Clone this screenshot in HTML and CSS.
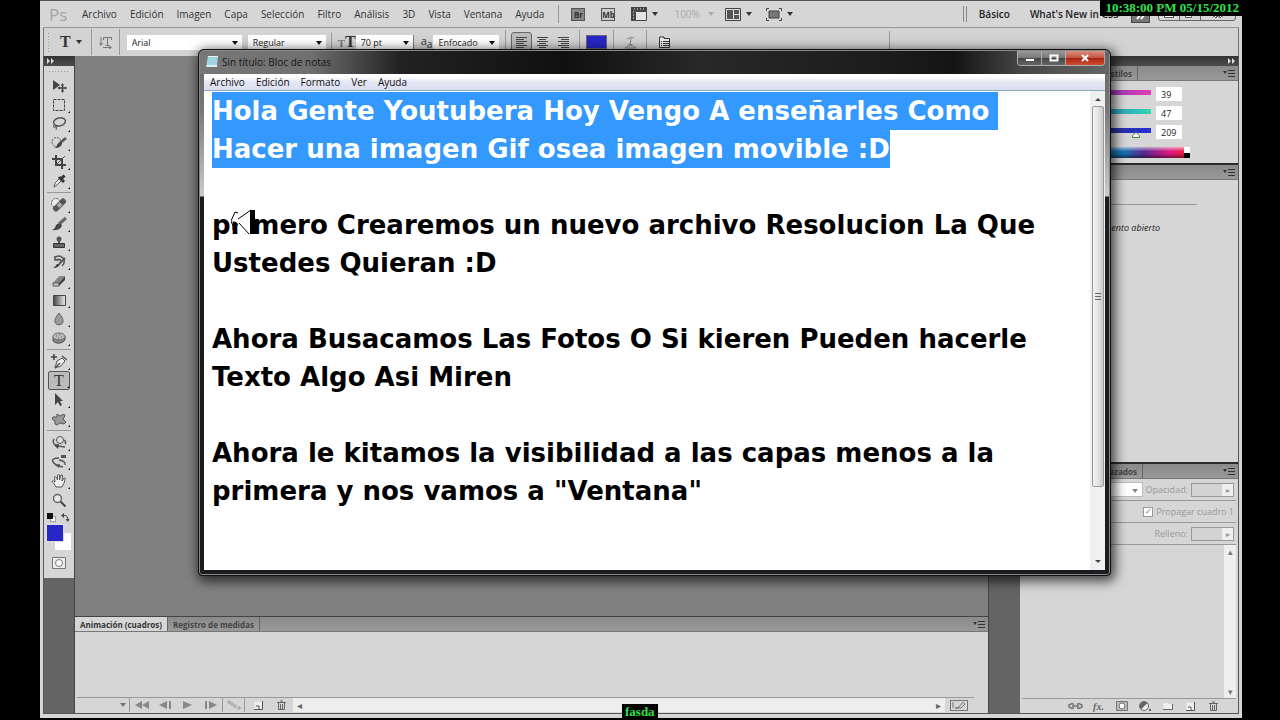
FILE: index.html
```html
<!DOCTYPE html>
<html lang="es">
<head>
    <meta charset="UTF-8">
    <meta name="viewport" content="width=device-width, initial-scale=1.0">
    <title>Photoshop - Bloc de notas</title>
    <link rel="stylesheet" href="styles.css">
</head>
<body>

<div class="app">
    <!-- barra de menus -->
    <header class="menubar">
        <span class="logo">Ps</span>
        <nav class="menus">
            <a href="#">Archivo</a>
            <a href="#">Edición</a>
            <a href="#">Imagen</a>
            <a href="#">Capa</a>
            <a href="#">Selección</a>
            <a href="#">Filtro</a>
            <a href="#">Análisis</a>
            <a href="#">3D</a>
            <a href="#">Vista</a>
            <a href="#">Ventana</a>
            <a href="#">Ayuda</a>
        </nav>
        <span class="rule"></span>
        <button class="box br">Br</button>
        <button class="box mb">Mb</button>
        <button class="drop extras" aria-label="Extras">
            <svg width="16" height="14" viewBox="0 0 16 14"><path d="M0 0h16v4H4v10H0z" fill="#444"/><path d="M4.500 4.500h11v9h-11z" fill="#e4e4e4" stroke="#444"/><path d="M3 2h1M6 2h1M9 2h1M12 2h1M2 5h1M2 8h1M2 11h1" stroke="#eee"/></svg>
        </button>
        <button class="drop zoom">100%</button>
        <button class="drop arrange" aria-label="Organizar documentos">
            <svg width="16" height="13" viewBox="0 0 16 13"><path d="M.5.500h15v12H.5z" fill="#ddd" stroke="#444"/><path d="M2 2h6v9H2zM9 2h5v4H9zM9 7h5v4H9z" fill="#555"/></svg>
        </button>
        <button class="drop" aria-label="Modo de pantalla">
            <svg width="16" height="13" viewBox="0 0 16 13"><path d="M3 3h10v7H3z" fill="#777" stroke="#444"/><path d="M.5 3V.5H3M13 .5h2.500V3M.5 10v2.500H3M13 12.500h2.500V10" fill="none" stroke="#444"/></svg>
        </button>
        <div class="workspaces">
            <span class="grip"></span>
            <a href="#">Básico</a>
            <a href="#">What's New in CS5</a>
            <button class="more" aria-label="Más espacios">
                <svg width="12" height="12" viewBox="0 0 12 12"><path d="M2 1l4 5-4 5M6 1l4 5-4 5" fill="none" stroke="#fff" stroke-width="2"/></svg>
            </button>
            <div class="winbtns">
                <button aria-label="Minimizar"><svg width="10" height="8" viewBox="0 0 10 8"><path d="M.5 3.500h9v4h-9z" fill="#fff" stroke="#555"/></svg></button>
                <button aria-label="Restaurar"><svg width="10" height="8" viewBox="0 0 10 8"><path d="M2.500.5h7v4h-7zM.5 3.500h6v4h-6z" fill="#fff" stroke="#555"/></svg></button>
                <button aria-label="Cerrar"><svg width="10" height="8" viewBox="0 0 10 8"><path d="M1 0l8 8M9 0L1 8" stroke="#555" stroke-width="3"/><path d="M1 0l8 8M9 0L1 8" stroke="#fff"/></svg></button>
            </div>
        </div>
    </header>

    <!-- opciones de la herramienta texto -->
    <div class="options">
        <span class="dots"></span>
        <button class="drop tool-t">T</button>
        <button class="orient" aria-label="Orientación">
            <svg width="13" height="13" viewBox="0 0 13 13"><path d="M2 1v8M.5 7L2 9.500 3.500 7M4.500 4V1.500h8V4M8.500 2v7M6.500 9.500h4M4 11.500h8M10 10l2.500 1.500L10 13" fill="none" stroke="#777"/></svg>
        </button>
        <span class="pick family"><select aria-label="Fuente"><option>Arial</option></select></span>
        <span class="pick style"><select aria-label="Estilo"><option>Regular</option></select></span>
        <span class="sizeicon"><small>T</small>T</span>
        <span class="pick size"><select aria-label="Tamaño"><option>70 pt</option></select></span>
        <span class="aa">a<sub>a</sub></span>
        <span class="pick alias"><select aria-label="Suavizado"><option>Enfocado</option></select></span>
        <div class="aligns">
            <button class="on" aria-label="Izquierda"><svg width="13" height="13" viewBox="0 0 13 13"><path d="M1 1.500h11M1 3.500h8M1 5.500h11M1 7.500h8M1 9.500h11M1 11.500h8" stroke="#444"/></svg></button>
            <button aria-label="Centro"><svg width="13" height="13" viewBox="0 0 13 13"><path d="M1 1.500h11M3 3.500h7M1 5.500h11M3 7.500h7M1 9.500h11M3 11.500h7" stroke="#444"/></svg></button>
            <button aria-label="Derecha"><svg width="13" height="13" viewBox="0 0 13 13"><path d="M1 1.500h11M4 3.500h8M1 5.500h11M4 7.500h8M1 9.500h11M4 11.500h8" stroke="#444"/></svg></button>
        </div>
        <button class="tint" aria-label="Color del texto"></button>
        <button class="warp" aria-label="Deformar"><svg width="13" height="13" viewBox="0 0 13 13"><path d="M3 3q4-3 7-1M7 2L6 9M4.500 8.500h4M1 12q6-5 11 0z" fill="none" stroke="#888"/></svg></button>
        <button class="chars" aria-label="Paneles"><svg width="13" height="13" viewBox="0 0 13 13"><path d="M1.500 2.500V1H6v1.500h5.500v9h-10z" fill="#eee" stroke="#333"/><path d="M3 5.500h1M5 5.500h6M3 7.500h1M5 7.500h6M3 9.500h1M5 9.500h6" stroke="#333"/></svg></button>
    </div>

    <div class="work">
        <aside class="tools">
            <div class="strip">
                <svg width="7" height="6" viewBox="0 0 7 6"><path d="M0 0l3 3-3 3zM4 0l3 3-3 3z" fill="#ddd"/></svg>
            </div>
            <div class="toolbox">
                <span class="dots wide"></span>
                <button class="plain" aria-label="Mover"><svg width="16" height="16" viewBox="0 0 16 16"><path d="M2 2v10l7-5z" fill="#444"/><path d="M11.500 6v8M7.500 10h8" stroke="#444" stroke-width="1.500"/><path d="M10 7.500L11.500 5 13 7.500zM10 12.500l1.500 2.500 1.500-2.500zM9 8.500L6.500 10 9 11.500zM14 8.500l2 1.500-2 1.500z" fill="#444"/></svg></button>
                <button aria-label="Marco"><svg width="16" height="16" viewBox="0 0 16 16"><path d="M2.500 2.500h11v11h-11z" fill="none" stroke="#444" stroke-dasharray="3 1"/></svg></button>
                <button aria-label="Lazo"><svg width="16" height="16" viewBox="0 0 16 16"><ellipse cx="8.500" cy="6" rx="6" ry="4" transform="rotate(-12 8 6)" fill="none" stroke="#555" stroke-width="1.500"/><path d="M4 9q-3 1-1 2.500 3 0 2-2.500 1 3 0 5" fill="none" stroke="#555"/></svg></button>
                <button aria-label="Selección rápida"><svg width="16" height="16" viewBox="0 0 16 16"><circle cx="5.500" cy="7" r="4.500" fill="none" stroke="#555" stroke-dasharray="2 1"/><path d="M15 3L9 8" stroke="#555" stroke-width="2.500"/><path d="M11 8q0 5-8 5 3-1 3.500-4 2-3 4.500-1z" fill="#444"/></svg></button>
                <button aria-label="Recortar"><svg width="16" height="16" viewBox="0 0 16 16"><path d="M5 1v10h10M1 5h10v10" fill="none" stroke="#444" stroke-width="2"/><path d="M5 11L14 2" stroke="#555"/></svg></button>
                <button aria-label="Cuentagotas"><svg width="16" height="16" viewBox="0 0 16 16"><path d="M3 14l1-4 5-5 2 2-5 5z" fill="#eee" stroke="#555"/><path d="M8 4l5 5M10 6l3.500-3.500" stroke="#333" stroke-width="3"/></svg></button>
                <hr>
                <button aria-label="Pincel corrector"><svg width="16" height="16" viewBox="0 0 16 16"><circle cx="5" cy="6" r="4.500" fill="#eee" stroke="#555" stroke-dasharray="2 1"/><path d="M5 11.500l7-7" stroke="#555" stroke-width="6" stroke-linecap="round"/><path d="M7 9.500l3-3" stroke="#aaa" stroke-width="4"/></svg></button>
                <button aria-label="Pincel"><svg width="16" height="16" viewBox="0 0 16 16"><path d="M15 2L8 8" stroke="#666" stroke-width="3"/><path d="M11 9q-1 6-10 5 3-1 4-5 3-3 6 0z" fill="#444"/></svg></button>
                <button aria-label="Tampón"><svg width="16" height="16" viewBox="0 0 16 16"><circle cx="8" cy="4" r="2.500" fill="#555"/><path d="M7 5h2v4H7z" fill="#555"/><path d="M2.500 8.500h11v4h-11z" fill="#666" stroke="#333"/></svg></button>
                <button aria-label="Pincel de historia"><svg width="16" height="16" viewBox="0 0 16 16"><path d="M3 4q5-4 9 0 3 4-1 8M4 2v4h4M5 6q4-2 5 1" fill="none" stroke="#555" stroke-width="1.500"/><path d="M14 4L8 10" stroke="#555" stroke-width="2"/><path d="M9 10q-1 4-7 4 3-2 4-4z" fill="#444"/></svg></button>
                <button aria-label="Borrador"><svg width="16" height="16" viewBox="0 0 16 16"><path d="M2 10l6-7h6l-6 7z" fill="#888"/><path d="M2 10h6v3H2z" fill="#ccc" stroke="#555"/><path d="M8 10l6-7v4l-6 6z" fill="#444"/></svg></button>
                <button aria-label="Degradado"><svg width="16" height="16" viewBox="0 0 16 16"><defs><linearGradient id="deg"><stop stop-color="#444"/><stop offset="1" stop-color="#eee"/></linearGradient></defs><path d="M2.500 3.500h12v10h-12z" fill="url(#deg)" stroke="#444"/></svg></button>
                <button aria-label="Desenfocar"><svg width="16" height="16" viewBox="0 0 16 16"><path d="M8 2q5 6 4 9-1 3-4 3t-4-3q-1-3 4-9z" fill="#999" stroke="#666"/></svg></button>
                <button aria-label="Esponja"><svg width="16" height="16" viewBox="0 0 16 16"><path d="M2 7v4q4 4 10 1l2-2V6z" fill="#888" stroke="#555"/><ellipse cx="8" cy="6.500" rx="6" ry="3.500" fill="#bbb" stroke="#666"/><path d="M5 6h1M8 5h1M10 7h1M7 8h1" stroke="#666"/></svg></button>
                <hr>
                <button aria-label="Pluma"><svg width="16" height="16" viewBox="0 0 16 16"><path d="M3 0v6M0 3h6" stroke="#444" stroke-width="1.500"/><path d="M4 14l2-7 5-3 3 3-4 5z" fill="#eee" stroke="#555"/><path d="M4 14l5-5M11 2l5 4" stroke="#555" stroke-width="1.500"/></svg></button>
                <button class="type on" aria-label="Texto">T</button>
                <button aria-label="Selección de trazado"><svg width="16" height="16" viewBox="0 0 16 16"><path d="M4 1v12l3-3 2 4 2-1-2-4h3z" fill="#444"/></svg></button>
                <button aria-label="Forma"><svg width="16" height="16" viewBox="0 0 16 16"><path d="M6 3l3 2 4-2 1 2-2 3 3 3-2 2-4-1-3 2-2-1v-3L1 8l1-2 4 0z" fill="#999" stroke="#555"/></svg></button>
                <hr>
                <button aria-label="Rotar 3D"><svg width="16" height="16" viewBox="0 0 16 16"><path d="M3 4q-3 5 4 7l7 1M14 9q2-3-2-4" fill="none" stroke="#555" stroke-width="1.500"/><circle cx="9" cy="5" r="3.500" fill="#ddd" stroke="#555"/><path d="M3 10l5-1-1 5z" fill="#444"/></svg></button>
                <button aria-label="Cámara 3D"><svg width="16" height="16" viewBox="0 0 16 16"><path d="M8 4Q0 4 2 8q3 4 10 5M8 6q7 1 6 5" fill="none" stroke="#555" stroke-width="1.500"/><path d="M4 11l5-1-1 4zM10 1h5v3h-5z" fill="#555"/></svg></button>
                <button aria-label="Mano"><svg width="16" height="16" viewBox="0 0 16 16"><path d="M5 14Q3 10 1 8.500q1-2 3 .5L3.500 4q1.500-1 2 .5L6.500 7V2q1.500-1 2 0v5l1.500-5q2-.5 1.500 1L11 8l2-3q2 0 1 2-1 4-3 7z" fill="#eee" stroke="#555"/></svg></button>
                <button class="plain" aria-label="Zoom"><svg width="16" height="16" viewBox="0 0 16 16"><circle cx="6.500" cy="6.500" r="4" fill="#e8e8e8" stroke="#666" stroke-width="1.500"/><path d="M9.500 9.500l5 5" stroke="#444" stroke-width="2"/></svg></button>
                <div class="mini">
                    <svg width="9" height="9" viewBox="0 0 9 9"><path d="M3.500 3.500h5v5h-5z" fill="#fff" stroke="#999"/><path d="M0 0h6v6H0z" fill="#111"/></svg>
                    <svg width="9" height="9" viewBox="0 0 9 9"><path d="M2 2.500q5-1 5 5" fill="none" stroke="#444"/><path d="M0 2.500L3 0v5zM4.500 6h4L7 9z" fill="#444"/></svg>
                </div>
                <div class="swatches"><span class="bg"></span><span class="fg"></span></div>
                <button class="plain mask" aria-label="Máscara rápida"><svg width="14" height="12" viewBox="0 0 14 12"><path d="M.5.500h13v11H.5z" fill="#eee" stroke="#777"/><circle cx="7" cy="6" r="3.500" fill="#fff" stroke="#777"/></svg></button>
            </div>
        </aside>

        <main class="center">
            <div class="canvas"></div>
            <section class="timeline">
                <div class="tabs">
                    <button class="tab active">Animación (cuadros)</button>
                    <button class="tab">Registro de medidas</button>
                    <svg class="menuicon" width="12" height="8" viewBox="0 0 12 8"><path d="M0 2h4L2 5z" fill="#333"/><path d="M5 1.500h7M5 4.500h7M5 7.500h7" stroke="#333"/></svg>
                </div>
                <div class="frames"></div>
                <div class="playbar">
                    <button class="loop" aria-label="Repetir"><svg width="6" height="4" viewBox="0 0 6 4"><path d="M0 0h6L3 4z" fill="#777"/></svg></button>
                    <button aria-label="Primero"><svg width="14" height="8" viewBox="0 0 14 8"><path d="M7 0v8L0 4zM14 0v8L7 4z" fill="#888"/></svg></button>
                    <button aria-label="Anterior"><svg width="12" height="8" viewBox="0 0 12 8"><path d="M8 0v8L0 4zM10 0h2v8h-2z" fill="#888"/></svg></button>
                    <button aria-label="Reproducir"><svg width="9" height="8" viewBox="0 0 9 8"><path d="M0 0v8l9-4z" fill="#888"/></svg></button>
                    <button aria-label="Siguiente"><svg width="12" height="8" viewBox="0 0 12 8"><path d="M4 0v8l8-4zM0 0h2v8H0z" fill="#888"/></svg></button>
                    <button class="side" aria-label="Intercalar"><svg width="14" height="10" viewBox="0 0 14 10"><path d="M1 1h2v2H1zM4 3h2v2H4zM7 5h2v2H7zM11 7h2v2h-2z" fill="#eee" stroke="#999"/></svg></button>
                    <button aria-label="Duplicar"><svg width="9" height="9" viewBox="0 0 9 9"><path d="M.5.500h8v8h-8z" fill="#eee"/><path d="M8.500 0v8.500H0M2 5h3v3" fill="none" stroke="#555"/></svg></button>
                    <button aria-label="Eliminar"><svg width="9" height="10" viewBox="0 0 9 10"><path d="M0 2.500h9M3 1h3M1.500 3v6.500h6V3M3.500 4v5M5.500 4v5" fill="none" stroke="#666"/></svg></button>
                    <div class="hscroll"><span>◂</span><span>▸</span></div>
                    <button class="convert" aria-label="Convertir"><svg width="16" height="10" viewBox="0 0 16 10"><path d="M2 2v6M4 8h3l5-6 2 2-4 4z" fill="none" stroke="#777"/></svg></button>
                </div>
            </section>
        </main>

        <div class="gutter"></div>

        <aside class="panels">
            <div class="strip right">
                <svg width="7" height="6" viewBox="0 0 7 6"><path d="M0 0l3 3-3 3zM4 0l3 3-3 3z" fill="#ddd"/></svg>
            </div>
            <section class="panel color">
                <div class="tabs">
                    <button class="tab end">Estilos</button>
                    <svg class="menuicon" width="12" height="8" viewBox="0 0 12 8"><path d="M0 2h4L2 5z" fill="#333"/><path d="M5 1.500h7M5 4.500h7M5 7.500h7" stroke="#333"/></svg>
                </div>
                <div class="sliders">
                    <div class="slide"><span class="track red"></span><input type="text" value="39" aria-label="R"></div>
                    <div class="slide"><span class="track green"></span><input type="text" value="47" aria-label="G"></div>
                    <div class="slide"><span class="track blue"><svg class="knob" width="8" height="6" viewBox="0 0 8 6"><path d="M4 .5l3.500 3v2h-7v-2z" fill="#fff" stroke="#484"/></svg></span><input type="text" value="209" aria-label="B"></div>
                </div>
                <div class="spectrum"><span class="ends"></span></div>
            </section>
            <section class="panel masks">
                <div class="tabs">
                    <svg class="menuicon" width="12" height="8" viewBox="0 0 12 8"><path d="M0 2h4L2 5z" fill="#333"/><path d="M5 1.500h7M5 4.500h7M5 7.500h7" stroke="#333"/></svg>
                </div>
                <hr>
                <p>Ningún documento abierto</p>
            </section>
            <section class="panel layers">
                <div class="tabs">
                    <button class="tab end paths">Trazados</button>
                    <svg class="menuicon" width="12" height="8" viewBox="0 0 12 8"><path d="M0 2h4L2 5z" fill="#333"/><path d="M5 1.500h7M5 4.500h7M5 7.500h7" stroke="#333"/></svg>
                </div>
                <div class="row">
                    <span class="pick blend"><select aria-label="Modo de fusión" disabled><option></option></select></span>
                    <label for="opacidad">Opacidad:</label>
                    <span class="num"><input id="opacidad" type="text" disabled><i>▸</i></span>
                </div>
                <div class="row">
                    <label class="check"><input type="checkbox" checked disabled>Propagar cuadro 1</label>
                </div>
                <div class="row">
                    <label for="relleno">Relleno:</label>
                    <span class="num"><input id="relleno" type="text" disabled><i>▸</i></span>
                </div>
                <div class="list"><div class="vscroll"><span>▴</span><span>▾</span></div></div>
                <div class="foot">
                    <button aria-label="Enlazar"><svg width="15" height="8" viewBox="0 0 15 8"><path d="M6 2.500L4 1.500 1 3v2l3 1.500 2-1M9 2.500l2-1L14 3v2l-3 1.500-2-1M4 4h7" fill="none" stroke="#777" stroke-width="1.500"/></svg></button>
                    <button class="fx" aria-label="Estilo de capa">fx.</button>
                    <button aria-label="Máscara"><svg width="12" height="10" viewBox="0 0 12 10"><path d="M.5.500h11v9H.5z" fill="#bbb" stroke="#777"/><circle cx="6" cy="5" r="3" fill="#fff" stroke="#777"/></svg></button>
                    <button aria-label="Ajuste"><svg width="12" height="10" viewBox="0 0 12 10"><circle cx="5" cy="5" r="4.500" fill="#eee" stroke="#666"/><path d="M2 8.500A4.500 4.500 0 0 1 8.500 2zM10 8h2v2h-2z" fill="#666"/></svg></button>
                    <button aria-label="Grupo"><svg width="10" height="8" viewBox="0 0 10 8"><path d="M.5 1h4l1 1h4v5.500h-9z" fill="#eee"/><path d="M9.500 2v5.500H0" fill="none" stroke="#666"/></svg></button>
                    <button aria-label="Nueva capa"><svg width="9" height="9" viewBox="0 0 9 9"><path d="M.5.500h8v8h-8z" fill="#eee"/><path d="M8.500 0v8.500H0M2 5h3v3" fill="none" stroke="#555"/></svg></button>
                    <button aria-label="Eliminar capa"><svg width="9" height="10" viewBox="0 0 9 10"><path d="M0 2.500h9M3 1h3M1.500 3v6.500h6V3M3.500 4v5M5.500 4v5" fill="none" stroke="#666"/></svg></button>
                </div>
            </section>
        </aside>
    </div>
</div>

<!-- ventana del bloc de notas -->
<section class="notepad">
    <header class="title">
        <svg width="12" height="13" viewBox="0 0 12 13"><path d="M2 1h10l-1 11H0z" fill="#9ed3e0"/><path d="M2 1h10v1H2z" fill="#eee"/><path d="M1 10h10v2H0z" fill="#d9f1f6"/></svg>
        <h1>Sin título: Bloc de notas</h1>
        <div class="caption">
            <button aria-label="Minimizar"><svg width="10" height="8" viewBox="0 0 10 8"><path d="M.5 4.500h9v3h-9z" fill="#fff" stroke="#555"/></svg></button>
            <button aria-label="Maximizar"><svg width="10" height="8" viewBox="0 0 10 8"><path d="M1.500 1.500h7v5h-7z" fill="none" stroke="#fff" stroke-width="2"/></svg></button>
            <button class="close" aria-label="Cerrar"><svg width="10" height="8" viewBox="0 0 10 8"><path d="M2 1l6 6M8 1L2 7" stroke="#fff" stroke-width="2"/></svg></button>
        </div>
    </header>
    <div class="inner">
        <nav class="notemenu">
            <a href="#">Archivo</a>
            <a href="#">Edición</a>
            <a href="#">Formato</a>
            <a href="#">Ver</a>
            <a href="#">Ayuda</a>
        </nav>
        <div class="editor">
            <textarea id="nota" aria-label="Texto" spellcheck="false" autofocus>Hola Gente Youtubera Hoy Vengo A enseñarles Como
Hacer una imagen Gif osea imagen movible :D

primero Crearemos un nuevo archivo Resolucion La Que
Ustedes Quieran :D

Ahora Busacamos Las Fotos O Si kieren Pueden hacerle
Texto Algo Asi Miren

Ahora le kitamos la visibilidad a las capas menos a la
primera y nos vamos a "Ventana"</textarea>
            <div class="scroll">
                <span class="up"></span>
                <div class="thumb"><i></i></div>
                <span class="down"></span>
            </div>
        </div>
    </div>
</section>

<svg class="pointer" width="26" height="28" viewBox="0 0 26 28"><path d="M0 12L4 3l3 3v5L19 1v24h-4L8 16l-3-3z" fill="#fff"/><path d="M0 12L4 3l3 1M7 10L20 1M0 12l2 5v4M8 14l10 11" fill="none" stroke="#000"/><path d="M19 1h5v24h-5z" fill="#000"/></svg>

<div class="clock">10:38:00 PM 05/15/2012</div>
<div class="tag">fasda</div>

<script src="script.js"></script>
</body>
</html>
```
FILE: styles.css
```css
* {
    box-sizing: border-box;
}
body {
    margin: 0;
    background-color: black;
    font-family: "Open Sans", sans-serif;
    font-size: 10px;
    color: #333;
}
button {
    border: 0;
    padding: 0;
    background: none;
    font: inherit;
    color: inherit;
    display: flex;
    align-items: center;
    justify-content: center;
}
a {
    color: inherit;
    text-decoration: none;
}
svg {
    display: block;
    flex: none;
}
hr {
    border: 0;
    margin: 0;
}

/* ventana de photoshop */
.app {
    margin: 0 38px 0 40px;
    height: calc(100vh - 2px);
    border-top: 1px solid #555;
    padding: 0 3px;
    background-color: #d6d6d6;
    display: flex;
    flex-direction: column;
}
.menubar {
    height: 27px;
    flex: none;
    display: flex;
    align-items: center;
    border-bottom: 1px solid #999;
    white-space: nowrap;
}
.logo {
    width: 39px;
    padding-left: 6px;
    font-size: 17px;
    color: #a3a3a3;
}
.menus {
    display: flex;
    gap: 13px;
    font-size: 10px;
}
.rule {
    width: 1px;
    height: 18px;
    margin: 0 12px 0 14px;
    background-color: #999;
}
.box {
    width: 14px;
    height: 13px;
    margin-right: 16px;
    border: 1px solid #555;
    background-color: #ccc;
    font-size: 8px;
    font-weight: bold;
}
.br {
    background-color: #888;
}
.drop::after {
    content: "";
    margin-left: 5px;
    border: 3px solid transparent;
    border-top: 4px solid #333;
    border-bottom: 0;
}
.extras {
    margin-right: 16px;
}
.zoom {
    color: #aaa;
    margin-right: 11px;
}
.zoom::after {
    border-top-color: #aaa;
    margin-left: 8px;
}
.arrange {
    margin-right: 14px;
}
.workspaces {
    margin-left: auto;
    display: flex;
    align-items: center;
    gap: 20px;
    font-weight: 600;
    color: #222;
}
.grip {
    width: 4px;
    height: 16px;
    border: 1px solid #888;
    border-width: 0 1px;
    margin-right: -8px;
}
.more {
    width: 19px;
    height: 17px;
    background-color: #777;
    border: 1px solid #444;
    margin: 0 -12px 0 -8px;
}
.winbtns {
    display: flex;
    border: 1px solid #666;
    border-radius: 3px;
    height: 14px;
    margin-right: 3px;
}
.winbtns button {
    width: 21px;
    border-right: 1px solid #666;
}
.winbtns button:last-child {
    width: 34px;
    border: 0;
}

/* barra de opciones */
.options {
    height: 28px;
    flex: none;
    display: flex;
    align-items: center;
    border-left: 1px solid #777;
    border-right: 1px solid #777;
    background-color: #d3d3d3;
    font-size: 9px;
}
.dots {
    width: 4px;
    height: 20px;
    margin-left: 3px;
    background-image: radial-gradient(#999 1px, transparent 1px);
    background-size: 3px 3px;
}
.dots.wide {
    width: 22px;
    height: 3px;
    margin: 4px auto 3px;
    flex: none;
}
.tool-t {
    margin-left: 9px;
    padding-right: 9px;
    height: 26px;
    border-right: 1px solid #999;
    font: bold 16px "Liberation Serif", serif;
}
.orient {
    width: 28px;
    height: 26px;
    border-right: 1px solid #999;
}
.pick {
    position: relative;
    height: 15px;
    background-color: white;
}
.pick select {
    appearance: none;
    display: block;
    width: 100%;
    height: 100%;
    border: 0;
    padding: 0 0 0 5px;
    background: none;
    font: inherit;
    color: #222;
}
.pick::after {
    content: "";
    position: absolute;
    right: 4px;
    top: 6px;
    border: 3px solid transparent;
    border-top: 4px solid #111;
    border-bottom: 0;
    pointer-events: none;
}
.family {
    width: 115px;
    margin: 0 6px 0 7px;
}
.style {
    width: 78px;
}
.sizeicon {
    margin-left: 5px;
    padding-left: 6px;
    border-left: 1px solid #999;
    font: bold 16px "Liberation Serif", serif;
}
.sizeicon small {
    font-size: 11px;
    color: #777;
}
.size {
    width: 58px;
    border-right: 1px solid #777;
}
.aa {
    margin: 0 1px 0 7px;
    font-size: 11px;
}
.aa sub {
    font-size: 10px;
}
.alias {
    width: 66px;
}
.aligns {
    display: flex;
    margin-left: 6px;
    padding: 0 5px;
    border: 1px solid #999;
    border-width: 0 1px;
    height: 24px;
    align-items: center;
}
.aligns button {
    width: 21px;
    height: 20px;
}
.aligns .on {
    border: 1px solid #666;
    border-radius: 3px;
    background-color: #bbb;
}
.tint {
    width: 21px;
    height: 14px;
    margin: 0 6px;
    background-color: #2727c8;
    border: 1px solid #667;
}
.warp {
    width: 34px;
    height: 24px;
    border: 1px solid #999;
    border-width: 0 1px;
}
.chars {
    width: 34px;
    height: 24px;
}
.options::after {
    content: "";
    width: 1px;
    height: 22px;
    margin-left: 208px;
    background-color: #999;
}

/* zona de trabajo */
.work {
    flex: 1;
    min-height: 0;
    display: flex;
    border: 1px solid #555;
    border-top: 0;
    margin-bottom: 4px;
    background-color: #646464;
}
.strip {
    height: 10px;
    flex: none;
    display: flex;
    align-items: center;
    padding: 0 3px;
    background-image: linear-gradient(#333, #4c4c4c);
}
.strip.right {
    justify-content: flex-end;
}
.tools {
    width: 30px;
}
.toolbox {
    display: flex;
    flex-direction: column;
    background-color: #d6d6d6;
    padding-bottom: 6px;
}
.toolbox button {
    position: relative;
    width: 22px;
    height: 19px;
    margin: 0 auto;
}
.toolbox button::after {
    content: "";
    position: absolute;
    right: 0;
    bottom: 1px;
    border: 1px solid #111;
    border-top-color: transparent;
    border-left-color: transparent;
}
.toolbox .plain::after {
    display: none;
}
.toolbox hr {
    height: 1px;
    margin: 2px 3px;
    background-color: #999;
}
.toolbox .type {
    font: 16px "Liberation Serif", serif;
}
.toolbox .on {
    border: 1px solid #555;
    border-radius: 2px;
    background-color: #bbb;
}
.mini {
    display: flex;
    justify-content: space-between;
    margin: 4px 4px 3px 3px;
}
.swatches {
    display: grid;
    grid-template-columns: 8px 8px 8px;
    grid-template-rows: 8px 8px 9px;
    margin-left: 3px;
}
.bg {
    grid-area: 2 / 2 / 4 / 4;
    background-color: white;
}
.fg {
    grid-area: 1 / 1 / 3 / 3;
    background-color: #2727c8;
    outline: 1px solid #ddd;
}
.toolbox .mask {
    margin-top: 3px;
}
.center {
    flex: 1;
    min-width: 0;
    display: flex;
    flex-direction: column;
    border: 1px solid #444;
    border-width: 0 1px;
}
.canvas {
    flex: 1;
    background-color: #808080;
}
.timeline {
    height: 97px;
    display: flex;
    flex-direction: column;
    border-top: 1px solid #444;
    background-color: #d6d6d6;
}
.tabs {
    height: 15px;
    flex: none;
    display: flex;
    align-items: stretch;
    background-image: linear-gradient(#8a8a8a, #999);
    border-bottom: 1px solid #777;
    font-size: 8px;
    font-weight: bold;
}
.tab {
    padding: 0 5px;
    border-right: 1px solid #666;
    color: #444;
}
.tab.active {
    background-color: #d6d6d6;
    color: #333;
}
.tab.end {
    width: 118px;
    justify-content: flex-end;
}
.tab.paths {
    width: 123px;
}
.menuicon {
    margin: 3px 3px 0 auto;
}
.frames {
    flex: 1;
}
.playbar {
    height: 15px;
    display: flex;
    align-items: center;
    margin: 0 14px 1px 2px;
    border-top: 1px solid #999;
}
.playbar button {
    width: 23px;
    height: 14px;
}
.playbar .loop {
    width: 53px;
    padding-right: 3px;
    justify-content: flex-end;
    border-right: 1px solid #999;
}
.playbar .side {
    border: 1px solid #999;
    border-width: 0 1px;
    margin-right: 2px;
}
.hscroll {
    flex: 1;
    height: 14px;
    display: flex;
    align-items: center;
    justify-content: space-between;
    padding: 0 4px;
    background-color: #eee;
    color: #666;
}
.playbar .convert {
    width: 18px;
    height: 11px;
    margin: 0 6px 0 5px;
    border: 1px solid #777;
}
.gutter {
    width: 31px;
}

/* paneles de la derecha */
.panels {
    width: 218px;
    display: flex;
    flex-direction: column;
}
.panel {
    background-color: #d6d6d6;
    border-bottom: 2px solid #2c2c2c;
}
.color {
    height: 99px;
    flex: none;
}
.sliders {
    display: flex;
    flex-direction: column;
    gap: 5px;
    padding: 6px 0 8px;
}
.slide {
    display: flex;
    gap: 5px;
}
.track {
    position: relative;
    width: 131px;
    height: 5px;
    margin-top: 3px;
}
.red {
    background-image: linear-gradient(90deg, #0030d0, #e040b0);
}
.green {
    background-image: linear-gradient(90deg, #2700d0, #30d8b0);
}
.blue {
    background-image: linear-gradient(90deg, #272f00, #2a2fd8);
}
.knob {
    position: absolute;
    right: 11px;
    top: 4px;
}
.slide input {
    width: 26px;
    height: 14px;
    border: 0;
    padding: 0 5px;
    font: 9px "Open Sans", sans-serif;
    color: #222;
}
.spectrum {
    height: 11px;
    margin: 0 48px 0 6px;
    display: flex;
    justify-content: flex-end;
    background-image: linear-gradient(rgba(255, 255, 255, .6), transparent 40%, transparent 60%, rgba(0, 0, 0, .5)), linear-gradient(90deg, #e02020, #e0e020, #20c040, #1878b8 50%, #1870b0 60%, #582890 72%, #e01880 88%, #e82020);
}
.ends {
    width: 6px;
    background-image: linear-gradient(white 50%, black 50%);
}
.masks {
    flex: 1;
}
.masks hr {
    height: 1px;
    margin: 24px 41px 0 0;
    background-color: #999;
}
.masks p {
    margin: 16px 78px 0 0;
    text-align: right;
    font-size: 9px;
    font-style: italic;
    color: #222;
}
.layers {
    height: 249px;
    display: flex;
    flex-direction: column;
    border-bottom: 0;
    font-size: 9px;
    color: #999;
}
.row {
    height: 22px;
    flex: none;
    display: flex;
    align-items: center;
    justify-content: flex-end;
    gap: 3px;
    margin: 0 2px;
    padding-right: 2px;
    border-bottom: 1px solid #999;
}
.blend {
    width: 110px;
    border: 1px solid #bbb;
}
.blend::after {
    border-top-color: #888;
}
.num {
    display: flex;
    width: 43px;
    height: 14px;
    border: 1px solid #999;
    background-color: #eee;
}
.num input {
    width: 30px;
    border: 0;
    padding: 0;
    background-color: #d3d3d3;
}
.num i {
    flex: 1;
    font-size: 8px;
    font-style: normal;
    line-height: 11px;
    text-align: center;
}
.check {
    display: flex;
    align-items: center;
    gap: 3px;
}
.check input {
    appearance: none;
    width: 10px;
    height: 10px;
    margin: 0;
    border: 1px solid #999;
    background-color: white;
}
.check input::before {
    content: "✓";
    display: block;
    font-size: 8px;
    line-height: 8px;
    text-align: center;
    color: #777;
}
.list {
    flex: 1;
    display: flex;
    justify-content: flex-end;
    margin: 0 2px;
    border-bottom: 1px solid #999;
}
.vscroll {
    width: 12px;
    display: flex;
    flex-direction: column;
    justify-content: space-between;
    align-items: center;
    background-color: #eee;
    color: #777;
}
.foot {
    height: 14px;
    display: flex;
    align-items: center;
    justify-content: flex-end;
    padding-right: 13px;
}
.foot button {
    width: 23px;
}
.foot .fx {
    font: italic bold 10px "Liberation Serif", serif;
    color: #666;
}

/* bloc de notas */
.notepad {
    position: absolute;
    left: 198px;
    right: 169px;
    top: 49px;
    bottom: 144px;
    display: flex;
    flex-direction: column;
    padding: 0 5px 5px;
    border: 1px solid #111;
    border-radius: 6px 6px 4px 4px;
    background-color: #1a1c20;
    background-image: linear-gradient(#666, #777 60px, #ccc 146px, #1a1c20 147px);
    box-shadow: inset 0 0 0 1px #8a8a8a, 2px 3px 12px 2px rgba(0, 0, 0, .7);
}
.title {
    height: 23px;
    flex: none;
    display: flex;
    align-items: center;
    margin: 1px -4px 0;
    padding: 0 0 2px 6px;
    border-radius: 4px 4px 0 0;
    background-image: linear-gradient(90deg, #777, #707070 12%, #222 22%, #101010 40%, #282828 55%, #1c1c1c 75%, #141414 83%, #444 90%, #666);
}
.title h1 {
    margin: 0 0 0 4px;
    font-size: 10px;
    font-weight: normal;
    color: #151515;
}
.caption {
    display: flex;
    align-self: flex-start;
    height: 15px;
    margin-left: auto;
    margin-right: 4px;
    border: 1px solid #aaa;
    border-top: 0;
    border-radius: 0 0 4px 4px;
    overflow: hidden;
}
.caption button {
    width: 24px;
    border-right: 1px solid #aaa;
    background-image: linear-gradient(#999, #777 50%, #444 50%, #666);
}
.caption .close {
    width: 38px;
    border: 0;
    background-image: linear-gradient(#d89080, #c45040 50%, #a82010 50%, #d05030);
}
.inner {
    flex: 1;
    min-height: 0;
    display: flex;
    flex-direction: column;
    background-color: white;
}
.notemenu {
    height: 17px;
    flex: none;
    display: flex;
    align-items: center;
    gap: 11px;
    padding-left: 6px;
    border-bottom: 1px solid #8ab;
    background-image: linear-gradient(white 20%, #e4e6f4 50%, #dadef0);
    color: #111;
}
.editor {
    flex: 1;
    min-height: 0;
    display: flex;
}
.editor textarea {
    flex: 1;
    border: 0;
    outline: 0;
    resize: none;
    overflow: hidden;
    padding: 1px 0 0 8px;
    font: bold 26px/38px "DejaVu Sans", sans-serif;
    color: black;
    white-space: pre;
}
.editor textarea::selection {
    background-color: #3399ff;
    color: white;
}
.scroll {
    width: 15px;
    display: flex;
    flex-direction: column;
    align-items: center;
    padding: 7px 0;
    background-color: #f0f0f0;
}
.up, .down {
    border: 3px solid transparent;
    border-bottom: 3px solid #444;
    border-top: 0;
}
.down {
    margin-top: auto;
    border-top: 3px solid #444;
    border-bottom: 0;
}
.thumb {
    width: 12px;
    height: 82%;
    margin-top: 5px;
    display: flex;
    align-items: center;
    justify-content: center;
    border: 1px solid #999;
    border-radius: 2px;
    background-image: linear-gradient(90deg, #f4f4f4, #e4e4e4 50%, #c8c8cc);
}
.thumb i {
    width: 6px;
    height: 7px;
    background-image: repeating-linear-gradient(#666 0 1px, transparent 1px 3px);
}

/* elementos por encima de todo */
.pointer {
    position: absolute;
    left: 231px;
    top: 209px;
}
.clock, .tag {
    position: absolute;
    height: 16px;
    background-color: black;
    color: #2fe04a;
    font: bold 13px/16px "Liberation Serif", serif;
    white-space: nowrap;
}
.clock {
    top: 0;
    right: 38px;
    padding: 0 3px 0 5px;
}
.tag {
    left: 622px;
    bottom: 0;
    padding: 0 3px;
}
```
FILE: script.js
```js
// deja seleccionado el primer parrafo
var nota = document.getElementById("nota");
nota.focus();
nota.setSelectionRange(0, nota.value.indexOf("\n\n"));
```
